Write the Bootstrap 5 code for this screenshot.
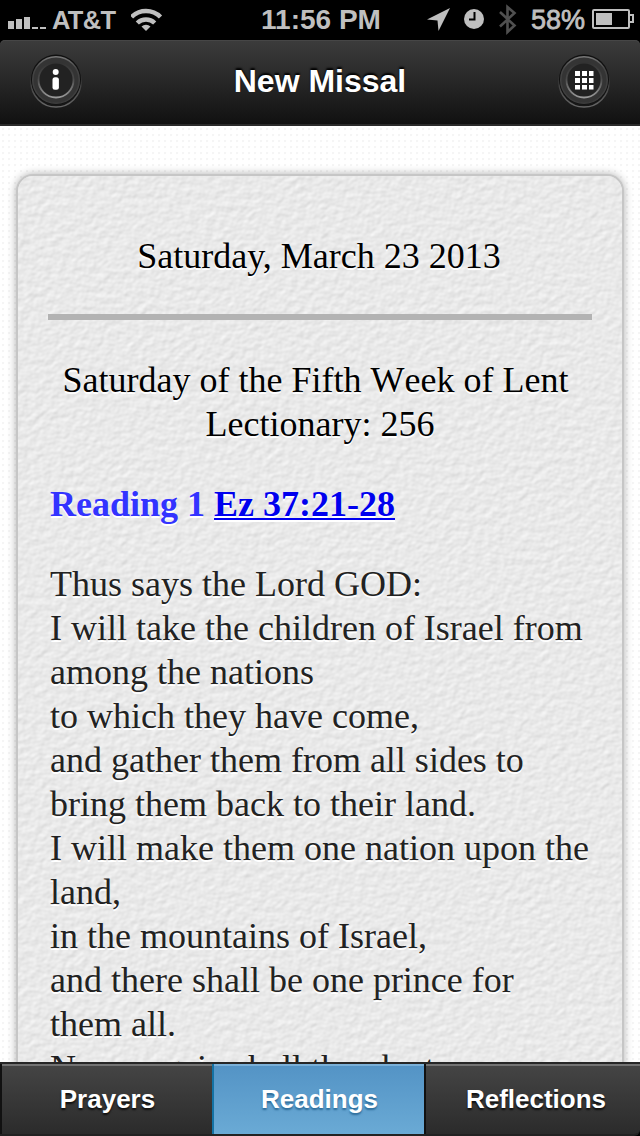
<!DOCTYPE html>
<html lang="en">
<head>
<meta charset="utf-8">
<meta name="viewport" content="width=device-width, initial-scale=1">
<title>New Missal</title>
<link rel="stylesheet" href="https://cdn.jsdelivr.net/npm/bootstrap@5.3.0/dist/css/bootstrap.min.css">
<style>
body{font-family:"Liberation Sans",Arial,sans-serif;background:#000;height:1136px}
.status-bar{height:40px;background:#000;color:#bfbfbf;font-weight:700;font-size:27px;line-height:40px;display:grid;grid-template-columns:1fr auto 1fr}
.status-bar svg{display:block;flex:none}
.clock{font-size:28px;padding-left:2px}
.carrier{font-size:25.5px;letter-spacing:-.7px;margin-left:6px}
.percent{font-size:27px;font-weight:400;-webkit-text-stroke:.8px #bfbfbf}
.title-bar{height:86px;background:linear-gradient(#3c3c3c,#111);border-bottom:2px solid #2a2a2a;border-radius:5px 5px 0 0;padding:0 29px;box-shadow:inset 0 1px #464646;flex:none}
.title-bar h1{font-size:32px;font-weight:700;color:#fff;text-shadow:0 -2px 2px #000;margin:0;line-height:1;padding-bottom:2px}
.round-btn{width:54px;height:56px;padding:0;border:0;background:none}
.round-btn svg{display:block}
.page-area{background-color:#fff;background-image:radial-gradient(circle,#f5f5f5 1px,transparent 1.6px);background-size:6px 6px;padding:48px 16px 0;min-height:0}
.paper{border:2px solid #c6c6c6;border-bottom:0;border-radius:17px 17px 0 0;background:#e9e9e9;height:1000px;box-shadow:0 0 9px rgba(0,0,0,.32);overflow:hidden;font-family:"Liberation Serif","Times New Roman",serif;font-size:36px;line-height:44px;color:#222;text-shadow:0 2px 0 #fff}
.grain{position:absolute;inset:0;width:100%;height:100%}
.sheet{position:relative;padding:58px 30px 0}
.date-line{margin-left:-2px}
.rule{height:6px;background:#b3b3b3;margin:36px 0 38px}
.feast{font-kerning:none}
.feast-day{margin-left:-9px}
.heading-black{color:#000}
.reading{color:#33f;font-size:36px;line-height:44px;margin:36px 2px 36px}
.reading a{color:#00e;text-decoration-thickness:2px;text-underline-offset:2px}
.verse{margin:0 0 0 2px;white-space:nowrap}
.tabs{height:74px;border-top:2px solid #262626;border-bottom:2px solid #222;background:#111;flex:none;overflow:hidden;border-radius:0 0 6px 0}
.tabs .nav-link{height:70px;padding:0;line-height:70px;text-align:center;font-size:26px;font-weight:700;color:#fff;text-shadow:0 2px 2px rgba(0,0,0,.75);background:linear-gradient(#454545,#2b2b2b);box-shadow:inset 0 2px #737373;border-radius:0;border-left:2px solid #111}
.tabs .nav-link.active{background:linear-gradient(#5393c5,#6aaad5);border-left-color:#1472a4;box-shadow:inset 0 2px #7ab0d8;text-shadow:0 2px 2px #2b6a97}
.tab-a{width:212px}.tab-b{width:212px}.tab-c{width:216px}
.tab-a .nav-link,.tab-b .nav-link{padding-left:1px}
.tab-c .nav-link{padding-left:6px}
</style>
</head>
<body class="d-flex flex-column overflow-hidden m-0">
<header class="status-bar flex-shrink-0">
  <div class="d-flex align-items-center">
    <svg width="46" height="40" fill="#bfbfbf"><path d="M8 21h6v8H8zM16 19h6v10h-6zM24 17h6v12h-6zM32 27h6v2h-6zM40 27h6v2h-6z"/></svg>
    <span class="carrier">AT&amp;T</span>
    <svg class="ms-3" width="32" height="40" viewBox="1 0 32 40" fill="none" stroke="#bfbfbf" stroke-width="4.500"><path d="M1.500 17a20.500 20.500 0 0 1 29 0M7.300 23a12.500 12.500 0 0 1 17.400 0"/><path d="M16 31l-4.500-4.400a6.200 6.200 0 0 1 9 0z" fill="#bfbfbf" stroke="none"/></svg>
  </div>
  <div class="clock text-center">11:56 PM</div>
  <div class="d-flex align-items-center justify-content-end">
    <svg width="105" height="40" viewBox="426 0 105 40"><path d="M427 19.500L450 8 438.500 31 437.500 20.500z" fill="#bfbfbf"/><circle cx="474" cy="19" r="10" fill="#bfbfbf"/><path d="M474.500 12v7.500H469" fill="none" stroke="#000" stroke-width="2"/><path d="M500 12l14.500 13.500-7 6.500V7l7 6L500 26.500" fill="none" stroke="#505050" stroke-width="2.600"/></svg>
    <span class="percent">58%</span>
    <svg width="55" height="40" viewBox="585 0 55 40"><rect x="593" y="10" width="36" height="18" rx="1" fill="none" stroke="#bfbfbf" stroke-width="2"/><path d="M596 13h16v12h-16z" fill="#bfbfbf"/><path d="M630 15h3v7h-3" fill="none" stroke="#bfbfbf" stroke-width="2"/></svg>
  </div>
</header>
<nav class="title-bar d-flex align-items-center justify-content-between">
  <button class="round-btn" aria-label="Information">
    <svg width="54" height="56" viewBox="0 1 54 56"><defs><linearGradient id="ring" x2="0" y2="1"><stop stop-color="#777"/><stop offset=".25" stop-color="#444"/><stop offset="1" stop-color="#3c3c3c"/></linearGradient><linearGradient id="inner" x2="0" y2="1"><stop stop-color="#333"/><stop offset=".45" stop-color="#484848"/><stop offset="1" stop-color="#999"/></linearGradient><linearGradient id="lip" x2="0" y2="1"><stop offset=".3" stop-color="#2c2c2c"/><stop offset="1" stop-color="#666"/></linearGradient>
    <g id="bezel"><circle cx="27" cy="29" r="25" fill="#171717" stroke="url(#lip)" stroke-width="1.500"/><circle cx="27" cy="26.500" r="25" fill="#101010"/><circle cx="27" cy="27" r="23.300" fill="#343434" stroke="url(#ring)" stroke-width="1.500"/><circle cx="27" cy="27" r="17.500" fill="#222" stroke="url(#inner)" stroke-width="1.800"/></g></defs><use href="#bezel"/><circle cx="26.700" cy="19" r="3" fill="#fff"/><rect x="23.500" y="24.300" width="6.400" height="12.500" rx="2.500" fill="#fff"/></svg>
  </button>
  <h1>New Missal</h1>
  <button class="round-btn" aria-label="Menu">
    <svg width="54" height="56" viewBox="0 1 54 56"><use href="#bezel"/><path fill="#fff" d="M18 18h5v5h-5zM25 18h5v5h-5zM32 18h4.500v5H32zM18 25h5v5h-5zM25 25h5v5h-5zM32 25h4.500v5H32zM18 32h5v4.500h-5zM25 32h5v4.500h-5zM32 32h4.500v4.500H32z"/></svg>
  </button>
</nav>
<main class="page-area flex-grow-1 overflow-hidden">
  <article class="paper position-relative">
    <svg class="grain" aria-hidden="true"><filter id="emboss" x="0" y="0" width="100%" height="100%" color-interpolation-filters="sRGB"><feTurbulence type="fractalNoise" baseFrequency=".13 .15" numOctaves="2" seed="8"/><feDiffuseLighting lighting-color="#fff" surfaceScale=".32" diffuseConstant="1.055"><feDistantLight azimuth="235" elevation="60"/></feDiffuseLighting></filter><rect width="100%" height="100%" filter="url(#emboss)"/></svg>
    <div class="sheet">
      <div class="date-line text-center heading-black">Saturday, March 23 2013</div>
      <div class="rule"></div>
      <div class="feast text-center heading-black"><div class="feast-day">Saturday of the Fifth Week of Lent</div>Lectionary: 256</div>
      <h2 class="reading fw-bold">Reading 1 <a href="#">Ez 37:21-28</a></h2>
      <p class="verse">Thus says the Lord GOD:<br>I will take the children of Israel from<br>among the nations<br>to which they have come,<br>and gather them from all sides to<br>bring them back to their land.<br>I will make them one nation upon the<br>land,<br>in the mountains of Israel,<br>and there shall be one prince for<br>them all.<br>Never again shall they be two</p>
    </div>
  </article>
</main>
<footer class="tabs">
  <ul class="nav flex-nowrap">
    <li class="nav-item tab-a"><a class="nav-link" href="#">Prayers</a></li>
    <li class="nav-item tab-b"><a class="nav-link active" href="#">Readings</a></li>
    <li class="nav-item tab-c"><a class="nav-link" href="#">Reflections</a></li>
  </ul>
</footer>
<script src="https://cdn.jsdelivr.net/npm/bootstrap@5.3.0/dist/js/bootstrap.bundle.min.js"></script>
</body>
</html>
